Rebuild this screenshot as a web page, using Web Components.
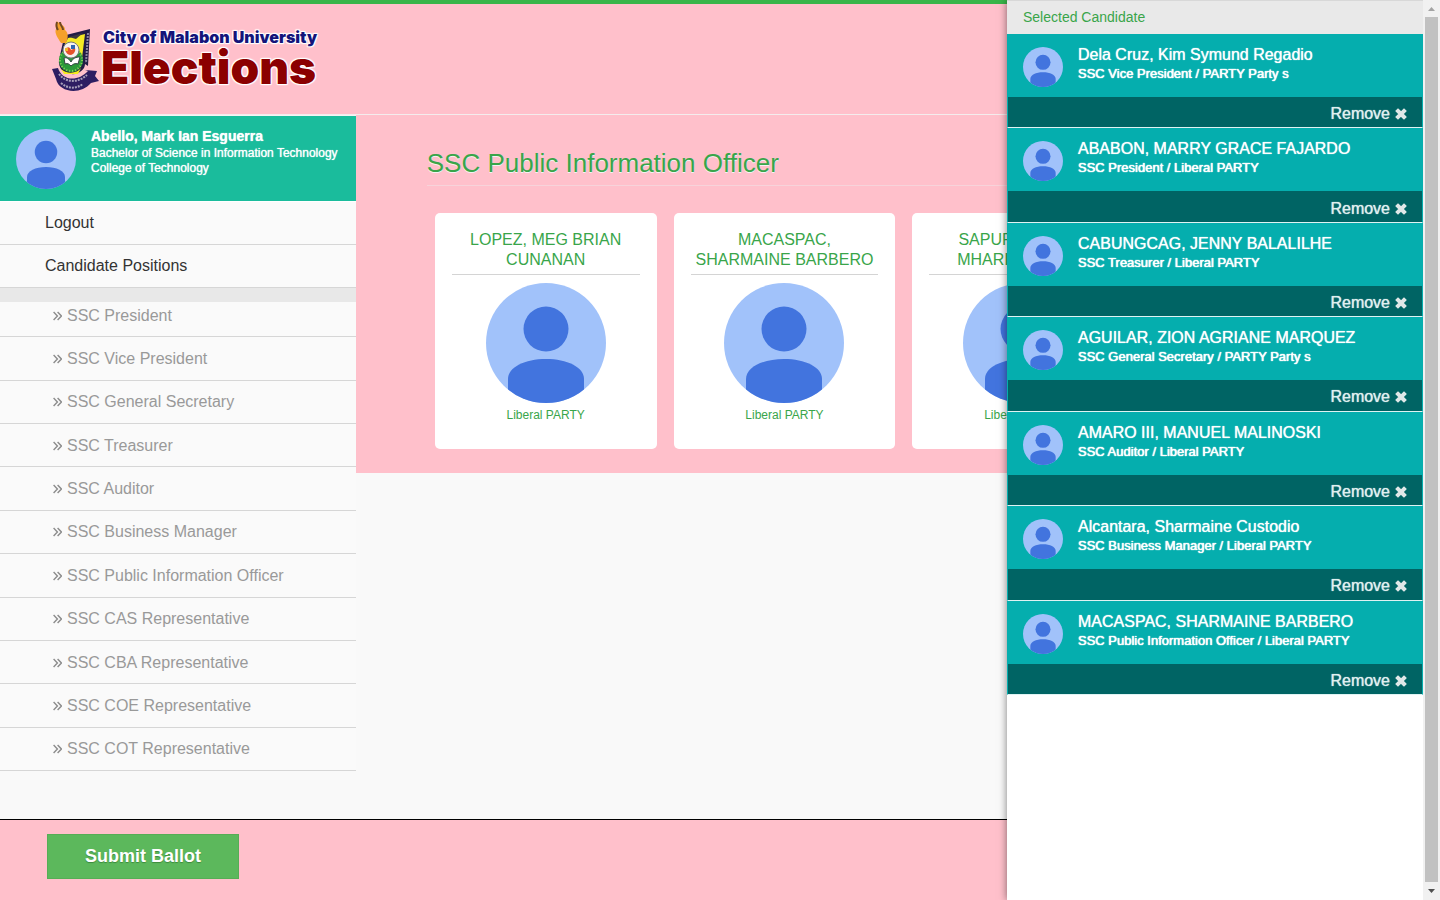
<!DOCTYPE html>
<html lang="en">
<head>
<meta charset="utf-8">
<title>City of Malabon University Elections</title>
<style>
  body { margin: 0; background: #f9f9f9; color: #333; font: 16px/20px "Liberation Sans", Arial, sans-serif; }
</style>
</head>
<body>
<election-app>
  <site-header slot="header"></site-header>

  <side-nav slot="nav">
    <user-badge slot="user">
      <span slot="name">Abello, Mark Ian Esguerra</span>
      <span slot="course">Bachelor of Science in Information Technology</span>
      <span slot="college">College of Technology</span>
    </user-badge>
    <nav-item slot="main" label="Logout"></nav-item>
    <nav-item slot="main" label="Candidate Positions"></nav-item>
    <nav-item sub label="SSC President"></nav-item>
    <nav-item sub label="SSC Vice President"></nav-item>
    <nav-item sub label="SSC General Secretary"></nav-item>
    <nav-item sub label="SSC Treasurer"></nav-item>
    <nav-item sub label="SSC Auditor"></nav-item>
    <nav-item sub label="SSC Business Manager"></nav-item>
    <nav-item sub label="SSC Public Information Officer"></nav-item>
    <nav-item sub label="SSC CAS Representative"></nav-item>
    <nav-item sub label="SSC CBA Representative"></nav-item>
    <nav-item sub label="SSC COE Representative"></nav-item>
    <nav-item sub label="SSC COT Representative"></nav-item>
  </side-nav>

  <position-section slot="content">
    <span slot="title">SSC Public Information Officer</span>
    <candidate-card>LOPEZ, MEG BRIAN CUNANAN<span slot="party">Liberal PARTY</span></candidate-card>
    <candidate-card>MACASPAC, SHARMAINE BARBERO<span slot="party">Liberal PARTY</span></candidate-card>
    <candidate-card>SAPURAN, ANNE MHARIE SANTOS<span slot="party">Liberal PARTY</span></candidate-card>
  </position-section>

  <ballot-footer slot="footer">Submit Ballot</ballot-footer>

  <selected-panel slot="panel">
    <span slot="title">Selected Candidate</span>
    <selected-candidate>Dela Cruz, Kim Symund Regadio<span slot="role">SSC Vice President / PARTY Party s</span></selected-candidate>
    <selected-candidate>ABABON, MARRY GRACE FAJARDO<span slot="role">SSC President / Liberal PARTY</span></selected-candidate>
    <selected-candidate>CABUNGCAG, JENNY BALALILHE<span slot="role">SSC Treasurer / Liberal PARTY</span></selected-candidate>
    <selected-candidate>AGUILAR, ZION AGRIANE MARQUEZ<span slot="role">SSC General Secretary / PARTY Party s</span></selected-candidate>
    <selected-candidate>AMARO III, MANUEL MALINOSKI<span slot="role">SSC Auditor / Liberal PARTY</span></selected-candidate>
    <selected-candidate>Alcantara, Sharmaine Custodio<span slot="role">SSC Business Manager / Liberal PARTY</span></selected-candidate>
    <selected-candidate>MACASPAC, SHARMAINE BARBERO<span slot="role">SSC Public Information Officer / Liberal PARTY</span></selected-candidate>
  </selected-panel>
  <scroll-rail slot="rail"></scroll-rail>
</election-app>

<script>
const define = (name, html) => {
  const template = document.createElement('template');
  template.innerHTML = html;
  customElements.define(name, class extends HTMLElement {
    constructor() {
      super();
      this.attachShadow({ mode: 'open' }).append(template.content.cloneNode(true));
    }
    connectedCallback() {
      const label = this.shadowRoot.querySelector('[data-label]');
      if (label) label.textContent = this.getAttribute('label');
    }
  });
};

define('election-app', `
<style>
  :host { display: grid; grid-template-columns: minmax(0, 1fr) 17px; min-height: 100vh; }
  .columns { display: grid; grid-template-columns: minmax(0, 1fr) minmax(0, 3fr); align-items: start; padding-bottom: 81px; }
  .footer { position: fixed; left: 0; right: 17px; bottom: 0; }
  .panel { position: fixed; top: 0; right: 17px; bottom: 0; width: 26rem; }
  .rail { position: sticky; top: 0; z-index: 2; height: 100vh; }
</style>
<div>
  <slot name="header"></slot>
  <div class="columns"><slot name="nav"></slot><slot name="content"></slot></div>
</div>
<div class="rail"><slot name="rail"></slot></div>
<div class="footer"><slot name="footer"></slot></div>
<aside class="panel"><slot name="panel"></slot></aside>`);

define('site-header', `
<style>
  :host { display: block; box-sizing: border-box; background: #ffc0cb; border-top: 4px solid #39b54a; border-bottom: 1px solid #f4eced; padding: 16px 52px 22px; }
  header { display: flex; align-items: flex-start; gap: 1px; height: 72px; }
  h1 { margin: 0; padding-top: 8px; font-family: Inter, "Liberation Sans", sans-serif; font-weight: 900; color: #8b0000;
    text-shadow: 0 0 2px #fff, 1px 1px 1px #fff, -1px -1px 1px #fff, 1px -1px 1px #fff, -1px 1px 1px #fff; }
  .school { display: block; padding-left: 2px; font-size: 16px; line-height: 18px; color: #14147a; }
  .title { display: block; font-size: 46px; line-height: 42px; }
  svg { display: block; flex: none; }
</style>
<header>
  <svg width="48" height="72" viewBox="0 0 48 72" aria-hidden="true">
    <path d="M14 15 38 9 36 46 33 44C33 50 26 55 19 54C11 54 6 47 7 40L11 22Z" fill="#211c45"/>
    <path d="M16 18 33 14 30 38 10 40 13 24Z" fill="#f3ea25"/>
    <path d="M17 17 31 13 24 19Z" fill="#3b3840"/>
    <path d="M36 13 34 43" stroke="#8a84a0" stroke-width="2" stroke-dasharray="2 1"/>
    <path d="M9 23C6 18 2 13 4 9c-1-4 0-6 1-8 1 2 2 2 4 1 0 4 4 3 4 8 4 3 3 9 1 13z" fill="#f5a02a"/>
    <path d="M5 2c-1 3-1 5 1 8M8 2c0 4 3 4 3 8" fill="none" stroke="#6f4724" stroke-width="2"/>
    <circle cx="19" cy="40" r="12" fill="#2b9a3a"/>
    <circle cx="19" cy="40" r="11" fill="none" stroke="#8ed05a" stroke-width="2" stroke-dasharray="1 2"/>
    <path d="M9 49c5 5 16 5 20-1l-3 6H12z" fill="#f5ee1d"/>
    <circle cx="19" cy="30" r="8" fill="#f6f3ef" stroke="#777"/>
    <path d="M13 30c2-4 5-3 6 0l4-2c1 3-1 6-4 7-3 0-5-2-6-5z" fill="#e6532c"/>
    <path d="M19 25h4v4h-4z" fill="#2d65b2"/><path d="M13 28h3v3h-3z" fill="#f3b52d"/>
    <path d="M12 38c3-1 5 1 7 4 2-4 5-5 9-5l-2 7c-3-1-5 0-7 2-2-2-3-3-6-2z" fill="#fff" stroke="#344"/>
    <path d="M0 49 6 48c4 13 20 14 30 3l-3-1 12 1-2 5 4 5-8 2C29 75 7 73 4 59z" fill="#2d1d62"/>
    <path d="M7 54c7 9 19 9 28 1" fill="none" stroke="#a8a0ba" stroke-width="2" stroke-dasharray="2 1"/>
    <path d="M9 63c7 6 15 6 22 1" fill="none" stroke="#a8a0ba" stroke-width="2" stroke-dasharray="2 1"/>
  </svg>
  <h1><span class="school">City of Malabon University</span><span class="title">Elections</span></h1>
</header>`);

define('person-avatar', `
<style>
  :host { display: block; flex: none; border-radius: 50%; overflow: hidden; background: #a1c2fa; }
  svg { display: block; width: 100%; height: 100%; }
</style>
<svg viewBox="0 0 120 120" fill="#4274de" aria-hidden="true">
  <circle cx="60" cy="46" r="22.5"/>
  <path d="M22 120V96C22 84 39 76 60 76S98 84 98 96V120Z"/>
</svg>`);

define('user-badge', `
<style>
  :host { display: flex; gap: 15px; box-sizing: border-box; height: 86px; padding: 13px 16px 12px; border-bottom: 1px solid #fff; background: #1abc9c; color: #fff; text-shadow: 0 0 1px #fff; }
  person-avatar { width: 60px; height: 60px; }
  .name { margin-bottom: 3px; font-size: 14px; line-height: 14px; font-weight: 700; }
  .line { font-size: 12px; line-height: 15px; white-space: nowrap; }
</style>
<person-avatar></person-avatar>
<div>
  <div class="name"><slot name="name"></slot></div>
  <div class="line"><slot name="course"></slot></div>
  <div class="line"><slot name="college"></slot></div>
</div>`);

define('nav-item', `
<style>
  :host { display: flex; box-sizing: border-box; min-height: 43px; border-bottom: 1px solid #d6d6d6; }
  a { flex: 1; display: flex; align-items: center; gap: 5px; padding-left: 45px; color: #333; text-decoration: none; }
  svg { display: none; }
  :host([sub]) a { padding: 1px 0 0 53px; color: #999; }
  :host([sub]) svg { display: block; }
</style>
<a href="#"><svg width="9" height="10" viewBox="0 0 9 10" fill="none" stroke="#8c8c8c" stroke-width="1.4" aria-hidden="true"><path d="M.6 1 4.4 5 .6 9M4.6 1 8.4 5 4.6 9"/></svg><span data-label></span></a>`);

define('side-nav', `
<style>
  :host { display: block; border-top: 1px solid #f4f4f4; background: #fafafa; }
  .divider { position: relative; height: 14px; background: #e8e8e8; }
  .positions { display: grid; grid-auto-rows: 1fr; height: 477px; margin-top: -8px; }
</style>
<nav>
  <slot name="user"></slot>
  <slot name="main"></slot>
  <div class="divider"></div>
  <div class="positions"><slot></slot></div>
</nav>`);

define('candidate-card', `
<style>
  :host { display: flex; flex-direction: column; align-items: center; box-sizing: border-box; min-height: 236px; padding: 17px; border-radius: 5px; background: #fff; color: #39a54a; text-align: center; }
  h3 { align-self: stretch; margin: 0 0 8px; padding-bottom: 4px; border-bottom: 1px solid #d4d4d4; font-size: 16px; line-height: 20px; font-weight: 400; }
  person-avatar { width: 120px; height: 120px; }
  p { margin: 4px 0 0; font-size: 12px; line-height: 16px; }
</style>
<h3><slot></slot></h3>
<person-avatar></person-avatar>
<p><slot name="party"></slot></p>`);

define('position-section', `
<style>
  :host { display: block; padding: 32px 42px 24px 71px; background: #ffc0cb; }
  h2 { margin: 0 0 27px; padding-bottom: 6px; border-bottom: 1px solid #f7d3da; color: #39a54a; font-size: 26px; line-height: 32px; font-weight: 400; text-shadow: 0 1px 0 #f3f3f3; }
  .cards { display: grid; grid-template-columns: repeat(4, minmax(0, 1fr)); gap: 17px; padding: 0 8px; }
</style>
<section>
  <h2><slot name="title"></slot></h2>
  <div class="cards"><slot></slot></div>
</section>`);

define('ballot-footer', `
<style>
  :host { display: block; box-sizing: border-box; height: 81px; padding: 14px 47px; border-top: 1px solid #000; background: #ffc0cb; }
  button { width: 192px; height: 45px; padding: 0 0 2px; border: 1px solid #56ad56; background: #5cb85c; color: #fff; font: 700 18px/20px "Liberation Sans", Arial, sans-serif; text-shadow: 0 1px 1px #3c8a3c; }
</style>
<footer><button type="button"><slot></slot></button></footer>`);

define('selected-candidate', `
<style>
  :host { display: flex; flex-direction: column; box-sizing: border-box; border: 1px solid #05aeae; border-top: 0; border-bottom-color: #dff3f3; background: #05aeae; color: #fff; text-shadow: 0 0 1px #fff; }
  .info { flex: none; display: flex; gap: 15px; height: 50px; padding: 13px 15px 0; }
  person-avatar { width: 40px; height: 40px; }
  .name { line-height: 16px; }
  .role { font-size: 13px; line-height: 22px; text-shadow: 0 0 1px #fff, 0 0 1px #fff; }
  .bar { flex: 1; display: flex; justify-content: flex-end; padding: 4px 15px 0; background: #006464; }
  button { display: flex; align-items: center; gap: 5px; padding: 0; border: 0; background: none; color: #e0f0f0; font: inherit; text-shadow: 0 0 1px #e0f0f0; }
</style>
<div class="info">
  <person-avatar></person-avatar>
  <div><div class="name"><slot></slot></div><div class="role"><slot name="role"></slot></div></div>
</div>
<div class="bar"><button type="button">Remove
  <svg width="12" height="12" viewBox="0 0 12 12" stroke="#e0e8e8" stroke-width="4" stroke-linecap="square" aria-hidden="true"><path d="M3 3 9 9M9 3 3 9"/></svg>
</button></div>`);

define('selected-panel', `
<style>
  :host { display: block; height: 100%; background: #fff; box-shadow: 0 0 8px rgba(0, 0, 0, .5); }
  h2 { box-sizing: border-box; height: 34px; margin: 0; padding: 7px 16px; border-top: 1px solid #d8d8d8; background: #e9e9e9; color: #39a54a; font-size: 14px; line-height: 18px; font-weight: 400; }
  .list { display: grid; grid-auto-rows: 1fr; height: 661px; }
</style>
<h2><slot name="title"></slot></h2>
<div class="list"><slot></slot></div>`);

define('scroll-rail', `
<style>
  :host { display: flex; flex-direction: column; align-items: center; height: 100%; background: #f1f1f1; }
  .thumb { flex: 1; width: 13px; background: #c1c1c1; }
  svg { display: block; }
</style>
<svg width="17" height="17" viewBox="0 0 17 17" aria-hidden="true"><path d="M5 11 8.500 7 12 11Z" fill="#a3a3a3"/></svg>
<div class="thumb"></div>
<svg width="17" height="18" viewBox="0 0 17 18" aria-hidden="true"><path d="M5 7 8.500 11 12 7Z" fill="#505050"/></svg>`);
</script>
</body>
</html>
